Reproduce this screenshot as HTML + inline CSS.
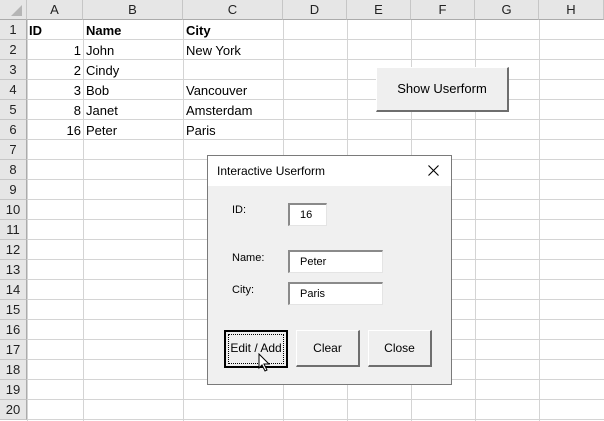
<!DOCTYPE html>
<html><head><style>
body{margin:0;width:604px;height:421px;overflow:hidden;background:#fff;font-family:"Liberation Sans",sans-serif;position:relative}
.grid{position:absolute;left:27px;top:20px;width:577px;height:401px;
background-image:linear-gradient(to bottom,transparent 19px,#d4d4d4 19px),linear-gradient(to right,#d4d4d4 1px,transparent 1px);
background-size:100% 20px,100% 100%}
.v{position:absolute;top:20px;height:401px;width:1px;background:#d4d4d4}
.ch{position:absolute;top:0;background:#e6e6e6;border-bottom:1px solid #ababab;border-right:1px solid #c6c6c6;font-size:13px;line-height:20px;text-align:center;color:#222;box-sizing:border-box;height:20px}
.rh{position:absolute;left:0;width:27px;height:20px;background:#e6e6e6;border-right:1px solid #ababab;border-bottom:1px solid #c6c6c6;box-sizing:border-box;font-size:13px;line-height:20px;text-align:center;color:#222}
.t{position:absolute;font-size:13px;line-height:20px;color:#000}
.b{font-weight:bold}
.r{text-align:right;width:52px}
.btn{position:absolute;background:#efefef;box-sizing:border-box;font-size:12px;text-align:center;color:#000}
.inp{position:absolute;background:#fff;border-top:2px solid #8a8a8a;border-left:2px solid #8a8a8a;border-right:1px solid #e4e4e4;border-bottom:1px solid #e4e4e4;box-sizing:border-box;font-size:11px;padding-left:10px}
.lbl{position:absolute;font-size:11px}
</style></head><body>
<div class="grid"></div>
<div class="v" style="left:83px"></div><div class="v" style="left:183px"></div><div class="v" style="left:283px"></div><div class="v" style="left:347px"></div><div class="v" style="left:411px"></div><div class="v" style="left:475px"></div><div class="v" style="left:539px"></div>
<div class="ch" style="left:0;width:27px"><svg width="27" height="20" style="position:absolute;left:0;top:0"><polygon points="22,5 22,16 11,16" fill="#b5b5b5"/></svg></div>
<div class="ch" style="left:27px;width:56px">A</div>
<div class="ch" style="left:83px;width:100px">B</div>
<div class="ch" style="left:183px;width:100px">C</div>
<div class="ch" style="left:283px;width:64px">D</div>
<div class="ch" style="left:347px;width:64px">E</div>
<div class="ch" style="left:411px;width:64px">F</div>
<div class="ch" style="left:475px;width:64px">G</div>
<div class="ch" style="left:539px;width:65px">H</div>
<div class="rh" style="top:20px">1</div><div class="rh" style="top:40px">2</div><div class="rh" style="top:60px">3</div><div class="rh" style="top:80px">4</div><div class="rh" style="top:100px">5</div><div class="rh" style="top:120px">6</div><div class="rh" style="top:140px">7</div><div class="rh" style="top:160px">8</div><div class="rh" style="top:180px">9</div><div class="rh" style="top:200px">10</div><div class="rh" style="top:220px">11</div><div class="rh" style="top:240px">12</div><div class="rh" style="top:260px">13</div><div class="rh" style="top:280px">14</div><div class="rh" style="top:300px">15</div><div class="rh" style="top:320px">16</div><div class="rh" style="top:340px">17</div><div class="rh" style="top:360px">18</div><div class="rh" style="top:380px">19</div><div class="rh" style="top:400px">20</div>
<div class="t b" style="left:29px;top:21px">ID</div><div class="t b" style="left:86px;top:21px">Name</div><div class="t b" style="left:186px;top:21px">City</div>
<div class="t r" style="left:29px;top:41px">1</div><div class="t" style="left:86px;top:41px">John</div><div class="t" style="left:186px;top:41px">New York</div>
<div class="t r" style="left:29px;top:61px">2</div><div class="t" style="left:86px;top:61px">Cindy</div>
<div class="t r" style="left:29px;top:81px">3</div><div class="t" style="left:86px;top:81px">Bob</div><div class="t" style="left:186px;top:81px">Vancouver</div>
<div class="t r" style="left:29px;top:101px">8</div><div class="t" style="left:86px;top:101px">Janet</div><div class="t" style="left:186px;top:101px">Amsterdam</div>
<div class="t r" style="left:29px;top:121px">16</div><div class="t" style="left:86px;top:121px">Peter</div><div class="t" style="left:186px;top:121px">Paris</div>
<div class="btn" style="left:376px;top:67px;width:133px;height:45px;border-top:1px solid #fff;border-left:1px solid #fff;border-right:2px solid #6e6e6e;border-bottom:2px solid #6e6e6e;line-height:42px;font-size:13px">Show Userform</div>
<div style="position:absolute;left:207px;top:155px;width:245px;height:230px;border:1px solid #7a7a7a;background:#f0f0f0;box-sizing:border-box">
<div style="position:relative;height:30px;background:#fff;font-size:12px;line-height:30px;padding-left:9px">Interactive Userform<svg style="position:absolute;right:12px;top:9px" width="11" height="11"><path d="M0.5,0.5 L10.5,10.5 M10.5,0.5 L0.5,10.5" stroke="#000" stroke-width="1.1"/></svg></div>
<div class="lbl" style="left:24px;top:48px">ID:</div>
<div class="inp" style="left:80px;top:47px;width:39px;height:23px;line-height:20px">16</div>
<div class="lbl" style="left:24px;top:96px">Name:</div>
<div class="inp" style="left:80px;top:94px;width:95px;height:23px;line-height:20px">Peter</div>
<div class="lbl" style="left:24px;top:128px">City:</div>
<div class="inp" style="left:80px;top:126px;width:95px;height:23px;line-height:20px">Paris</div>
<div class="btn" style="left:16px;top:174px;width:64px;height:38px;border:2px solid #000;line-height:32px"><div style="position:absolute;left:2px;top:2px;right:2px;bottom:2px;border:1px dotted #000"></div>Edit / Add</div>
<div class="btn" style="left:88px;top:174px;width:64px;height:37px;border-top:1px solid #fff;border-left:1px solid #fff;border-right:2px solid #6e6e6e;border-bottom:2px solid #6e6e6e;line-height:34px">Clear</div>
<div class="btn" style="left:160px;top:174px;width:64px;height:37px;border-top:1px solid #fff;border-left:1px solid #fff;border-right:2px solid #6e6e6e;border-bottom:2px solid #6e6e6e;line-height:34px">Close</div>
<svg style="position:absolute;left:50px;top:197px" width="14" height="20"><path d="M1,1 L1,15 L4,12 L7,18 L9,17 L6,11 L11,11 Z" fill="#fff" stroke="#000" stroke-width="1"/></svg>
</div>
</body></html>
